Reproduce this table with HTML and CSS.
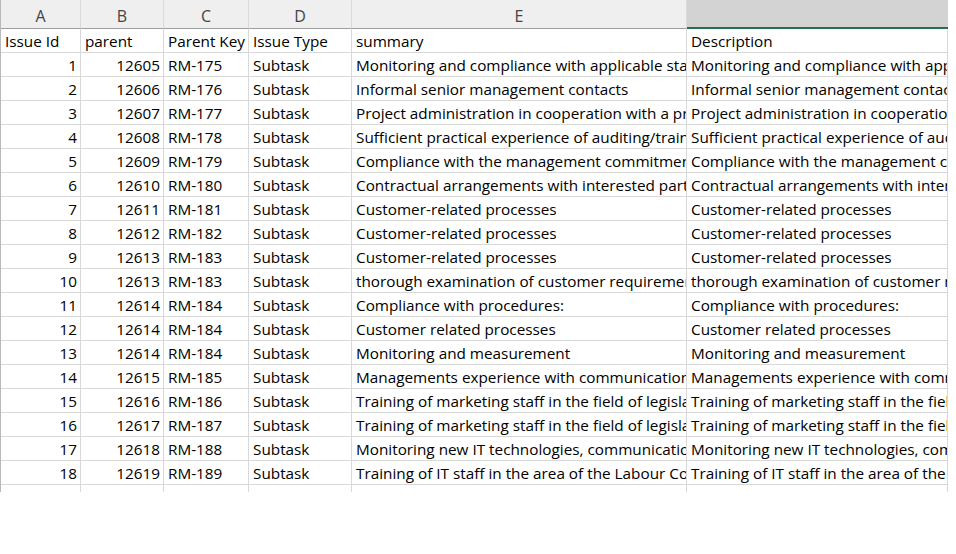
FILE: index.html
```html
<!DOCTYPE html>
<html>
<head>
<meta charset="utf-8">
<link rel="stylesheet" href="styles.css">
</head>
<body>
<div class="sheet">
  <div class="grid">
    <div class="col-head">A</div>
    <div class="col-head">B</div>
    <div class="col-head">C</div>
    <div class="col-head">D</div>
    <div class="col-head">E</div>
    <div class="col-head col-sel"></div>

    <div class="cell">Issue Id</div>
    <div class="cell">parent</div>
    <div class="cell">Parent Key</div>
    <div class="cell">Issue Type</div>
    <div class="cell">summary</div>
    <div class="cell">Description</div>

    <div class="cell num">1</div><div class="cell num">12605</div><div class="cell">RM-175</div><div class="cell">Subtask</div><div class="cell">Monitoring and compliance with applicable standards</div><div class="cell">Monitoring and compliance with applicable standards</div>
    <div class="cell num">2</div><div class="cell num">12606</div><div class="cell">RM-176</div><div class="cell">Subtask</div><div class="cell">Informal senior management contacts</div><div class="cell">Informal senior management contacts</div>
    <div class="cell num">3</div><div class="cell num">12607</div><div class="cell">RM-177</div><div class="cell">Subtask</div><div class="cell">Project administration in cooperation with a project manager</div><div class="cell">Project administration in cooperation with a project manager</div>
    <div class="cell num">4</div><div class="cell num">12608</div><div class="cell">RM-178</div><div class="cell">Subtask</div><div class="cell">Sufficient practical experience of auditing/training</div><div class="cell">Sufficient practical experience of auditing/training</div>
    <div class="cell num">5</div><div class="cell num">12609</div><div class="cell">RM-179</div><div class="cell">Subtask</div><div class="cell">Compliance with the management commitment</div><div class="cell">Compliance with the management commitment</div>
    <div class="cell num">6</div><div class="cell num">12610</div><div class="cell">RM-180</div><div class="cell">Subtask</div><div class="cell">Contractual arrangements with interested parties</div><div class="cell">Contractual arrangements with interested parties</div>
    <div class="cell num">7</div><div class="cell num">12611</div><div class="cell">RM-181</div><div class="cell">Subtask</div><div class="cell">Customer-related processes</div><div class="cell">Customer-related processes</div>
    <div class="cell num">8</div><div class="cell num">12612</div><div class="cell">RM-182</div><div class="cell">Subtask</div><div class="cell">Customer-related processes</div><div class="cell">Customer-related processes</div>
    <div class="cell num">9</div><div class="cell num">12613</div><div class="cell">RM-183</div><div class="cell">Subtask</div><div class="cell">Customer-related processes</div><div class="cell">Customer-related processes</div>
    <div class="cell num">10</div><div class="cell num">12613</div><div class="cell">RM-183</div><div class="cell">Subtask</div><div class="cell">thorough examination of customer requirements</div><div class="cell">thorough examination of customer requirements</div>
    <div class="cell num">11</div><div class="cell num">12614</div><div class="cell">RM-184</div><div class="cell">Subtask</div><div class="cell">Compliance with procedures:</div><div class="cell">Compliance with procedures:</div>
    <div class="cell num">12</div><div class="cell num">12614</div><div class="cell">RM-184</div><div class="cell">Subtask</div><div class="cell">Customer related processes</div><div class="cell">Customer related processes</div>
    <div class="cell num">13</div><div class="cell num">12614</div><div class="cell">RM-184</div><div class="cell">Subtask</div><div class="cell">Monitoring and measurement</div><div class="cell">Monitoring and measurement</div>
    <div class="cell num">14</div><div class="cell num">12615</div><div class="cell">RM-185</div><div class="cell">Subtask</div><div class="cell">Managements experience with communication</div><div class="cell">Managements experience with communication</div>
    <div class="cell num">15</div><div class="cell num">12616</div><div class="cell">RM-186</div><div class="cell">Subtask</div><div class="cell">Training of marketing staff in the field of legislation</div><div class="cell">Training of marketing staff in the field of legislation</div>
    <div class="cell num">16</div><div class="cell num">12617</div><div class="cell">RM-187</div><div class="cell">Subtask</div><div class="cell">Training of marketing staff in the field of legislation</div><div class="cell">Training of marketing staff in the field of legislation</div>
    <div class="cell num">17</div><div class="cell num">12618</div><div class="cell">RM-188</div><div class="cell">Subtask</div><div class="cell">Monitoring new IT technologies, communication</div><div class="cell">Monitoring new IT technologies, communication</div>
    <div class="cell num">18</div><div class="cell num">12619</div><div class="cell">RM-189</div><div class="cell">Subtask</div><div class="cell">Training of IT staff in the area of the Labour Code</div><div class="cell">Training of IT staff in the area of the Labour Code</div>
    <div class="cell num">19</div><div class="cell num">12620</div><div class="cell">RM-190</div><div class="cell">Subtask</div><div class="cell">Timely communication of changes</div><div class="cell">Timely communication of changes</div>
  </div>
</div>
</body>
</html>
```

FILE: styles.css
```css
html, body {
  margin: 0;
  padding: 0;
  background: #ffffff;
}

.sheet {
  width: 948px;
  height: 492px;
  overflow: hidden;
  border-left: 1px solid #b9b9b9;
  box-sizing: border-box;
}

.grid {
  display: grid;
  grid-template-columns: 80px 83px 85px 103px 335px 261px;
  grid-template-rows: 29px;
  grid-auto-rows: 24px;
  font-family: "Open Sans", "Noto Sans", sans-serif;
  font-size: 15.3px;
  color: #000;
}

.col-head {
  height: 29px;
  box-sizing: border-box;
  background: #efefef;
  border-right: 1px solid #dadada;
  border-bottom: 1px solid #9e9e9e;
  color: #444;
  text-align: center;
  font-size: 16px;
  line-height: 32px;
}

.col-sel {
  background: #d3d3d3;
  border-bottom: 2px solid #217346;
  border-right: none;
}

.cell {
  box-sizing: border-box;
  height: 24px;
  border-right: 1px solid #d8d8d8;
  border-bottom: 1px solid #d8d8d8;
  padding: 0 4px;
  line-height: 24px;
  white-space: nowrap;
  overflow: hidden;
}

.num {
  text-align: right;
  padding-right: 3px;
}
```
